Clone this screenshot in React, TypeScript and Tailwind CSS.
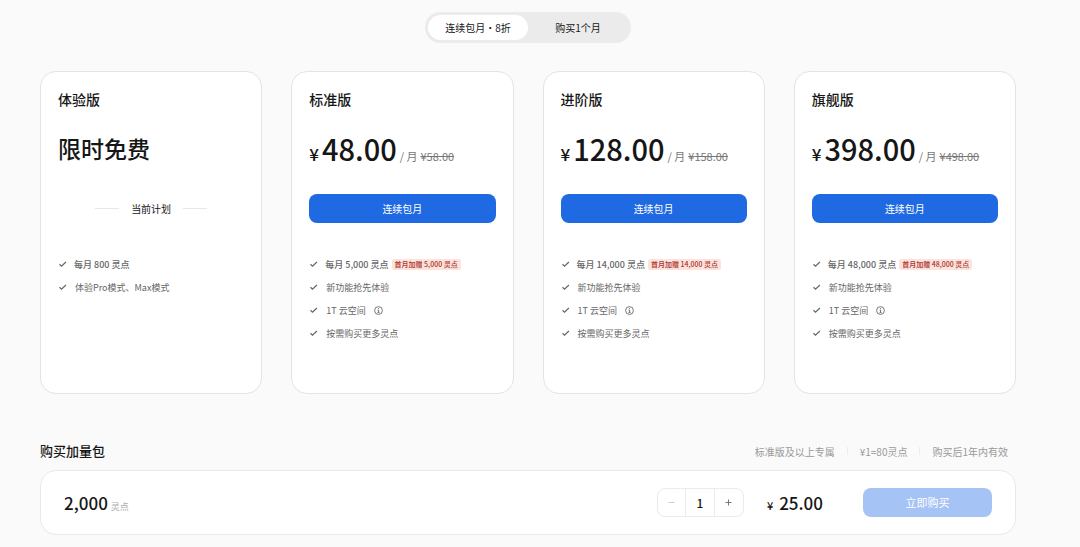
import { useState } from "react";

type Plan = {
    name: string;
    price?: string;
    original?: string;
    points: string;
    bonus?: string;
};

const plans: Plan[] = [
    { name: "体验版", points: "800" },
    { name: "标准版", price: "48.00", original: "58.00", points: "5,000", bonus: "5,000" },
    { name: "进阶版", price: "128.00", original: "158.00", points: "14,000", bonus: "14,000" },
    { name: "旗舰版", price: "398.00", original: "498.00", points: "48,000", bonus: "48,000" },
];

const cycles = ["连续包月・8折", "购买1个月"];

const CheckIcon = () => (
    <svg className="w-[9px] h-[9px] shrink-0 text-[#666]" viewBox="0 0 9 9" fill="none" stroke="currentColor" strokeWidth="1.2" aria-hidden="true">
        <path d="M1.5 4.3 3.5 6.2 7.9 2" />
    </svg>
);

const InfoIcon = () => (
    <svg className="w-[9px] h-[9px] shrink-0 text-[#555]" viewBox="0 0 9 9" fill="none" stroke="currentColor" strokeWidth="0.8" aria-hidden="true">
        <circle cx="4.5" cy="4.5" r="3.9" />
        <path d="M4.5 2.1v1M3.6 4.1h1v2.3M3.5 6.4h2.1" />
    </svg>
);

const PlanCard = ({ plan }: { plan: Plan }) => {
    const paid = Boolean(plan.price);

    return (
        <section className="bg-white border border-[#e4e4e4] rounded-2xl px-[17px] pt-[17px] pb-12">
            <h2 className="text-[14px] leading-5 font-medium">{plan.name}</h2>
            {paid ? (
                <p className="mt-[19px] h-10 leading-10 flex items-baseline whitespace-nowrap">
                    <span className="text-[17px] font-medium">¥</span>
                    <span className="ml-[3px] text-[29px] font-medium">{plan.price}</span>
                    <span className="ml-[3px] text-[11px] text-[#777]">/ 月</span>
                    <del className="ml-[3px] text-[11px] text-[#777]">¥{plan.original}</del>
                </p>
            ) : (
                <p className="mt-[19px] h-10 leading-10 text-[23px] font-medium">限时免费</p>
            )}
            {paid ? (
                <button className="mt-[26px] w-full h-[29px] rounded-lg bg-[#1f69e3] text-white text-[10px] cursor-pointer">连续包月</button>
            ) : (
                <div className="mt-[26px] h-[29px] flex items-center justify-center gap-3 text-[10px]">
                    <span className="w-6 h-px bg-[#e8e8e8]"></span>
                    当前计划
                    <span className="w-6 h-px bg-[#e8e8e8]"></span>
                </div>
            )}
            <ul className="mt-[30px] text-[9px] leading-[23px] text-[#666] whitespace-nowrap">
                <li className="flex items-center font-medium">
                    <CheckIcon />
                    <span className="ml-[7px]">每月 {plan.points} 灵点</span>
                    {plan.bonus && (
                        <span className="ml-[3px] px-[3px] rounded-xs bg-[#fde3dc] text-[#a8322c] text-[7px] leading-[11px]">首月加赠 {plan.bonus} 灵点</span>
                    )}
                </li>
                {paid ? (
                    <>
                        <li className="flex items-center gap-2"><CheckIcon />新功能抢先体验</li>
                        <li className="flex items-center gap-2"><CheckIcon />1T 云空间<InfoIcon /></li>
                        <li className="flex items-center gap-2"><CheckIcon />按需购买更多灵点</li>
                    </>
                ) : (
                    <li className="flex items-center gap-2"><CheckIcon />体验Pro模式、Max模式</li>
                )}
            </ul>
        </section>
    );
};

const App = () => {
    const [cycle, setCycle] = useState(0);
    const [count, setCount] = useState(1);

    return (
        <main lang="zh-CN" className="min-h-screen bg-[#fafafa] pl-10 pr-16 pt-3 pb-3 text-[#161616] font-['Noto_Sans_CJK_SC',sans-serif]">
            <div className="flex justify-center">
                <div className="flex p-[3px] rounded-full bg-[#ebebeb] text-[10px]">
                    {cycles.map((label, index) => (
                        <button
                            key={label}
                            aria-pressed={cycle === index}
                            onClick={() => setCycle(index)}
                            className={`w-[100px] h-[25px] rounded-full cursor-pointer ${cycle === index ? "bg-white" : ""}`}
                        >
                            {label}
                        </button>
                    ))}
                </div>
            </div>

            <div className="mt-7 grid grid-cols-4 gap-[29px]">
                {plans.map(plan => (
                    <PlanCard key={plan.name} plan={plan} />
                ))}
            </div>

            <div className="mt-[47px] pr-2 h-5 flex items-center justify-between">
                <h2 className="text-[13px] font-medium">购买加量包</h2>
                <div className="flex items-center gap-3 text-[10px] text-[#999]">
                    <span>标准版及以上专属</span>
                    <span className="w-px h-2 bg-[#ececec]"></span>
                    <span>¥1=80灵点</span>
                    <span className="w-px h-2 bg-[#ececec]"></span>
                    <span>购买后1年内有效</span>
                </div>
            </div>

            <section className="mt-[9px] px-[23px] py-[17px] flex items-center bg-white border border-[#e9e9e9] rounded-2xl">
                <p className="h-[29px] flex items-baseline gap-[3px] leading-[29px]">
                    <span className="text-[17px] font-medium">2,000</span>
                    <span className="text-[9px] text-[#aaa]">灵点</span>
                </p>
                <div className="ml-auto flex h-[29px] border border-[#ebebeb] rounded-lg divide-x divide-[#ebebeb]">
                    <button
                        aria-label="减少"
                        disabled={count === 1}
                        onClick={() => setCount(count - 1)}
                        className="w-7 flex items-center justify-center text-[#777] disabled:text-[#ccc]"
                    >
                        <svg className="w-[7px] h-[7px]" viewBox="0 0 7 7" stroke="currentColor" strokeWidth="1"><path d="M.5 3.5h6" /></svg>
                    </button>
                    <input
                        aria-label="数量"
                        className="w-[29px] text-center text-[12px] font-medium outline-none"
                        value={count}
                        onChange={e => setCount(Math.max(1, Number(e.target.value) || 1))}
                    />
                    <button
                        aria-label="增加"
                        onClick={() => setCount(count + 1)}
                        className="w-7 flex items-center justify-center text-[#777]"
                    >
                        <svg className="w-[7px] h-[7px]" viewBox="0 0 7 7" stroke="currentColor" strokeWidth="1"><path d="M.5 3.5h6M3.5.5v6" /></svg>
                    </button>
                </div>
                <p className="ml-[23px] h-[29px] flex items-baseline gap-[6px] font-medium leading-[29px]">
                    <span className="text-[11px]">¥</span>
                    <span className="text-[17px]">{(count * 25).toFixed(2)}</span>
                </p>
                <button className="ml-10 w-[129px] h-[29px] rounded-lg bg-[#a5c3f4] text-white text-[11px] cursor-pointer">立即购买</button>
            </section>
        </main>
    );
};

export default App;
